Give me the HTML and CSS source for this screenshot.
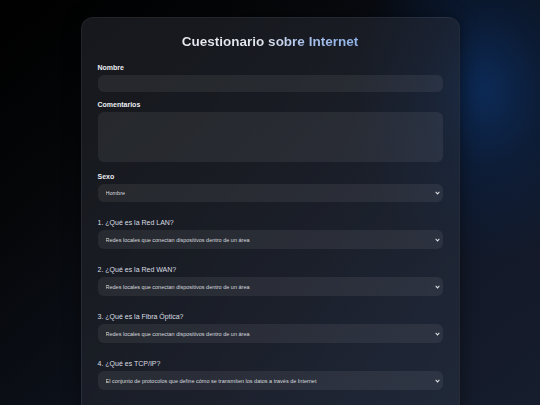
FILE: index.html
```html
<!DOCTYPE html>
<html lang="es">
<head>
<meta charset="utf-8">
<title>Cuestionario sobre Internet</title>
<link rel="stylesheet" href="styles.css">
</head>
<body>
<main class="card">
  <h1 class="title">Cuestionario sobre Internet</h1>
  <form class="form">
    <div class="field">
      <label class="label" for="nombre">Nombre</label>
      <input class="control input" id="nombre" type="text">
    </div>
    <div class="field">
      <label class="label" for="comentarios">Comentarios</label>
      <textarea class="control textarea" id="comentarios"></textarea>
    </div>
    <div class="field field-sexo">
      <label class="label" for="sexo">Sexo</label>
      <select class="control select" id="sexo">
        <option>Hombre</option>
        <option>Mujer</option>
      </select>
    </div>
    <div class="field question">
      <label class="qlabel" for="q1">1. ¿Qué es la Red LAN?</label>
      <select class="control select" id="q1">
        <option>Redes locales que conectan dispositivos dentro de un área</option>
      </select>
    </div>
    <div class="field question">
      <label class="qlabel" for="q2">2. ¿Qué es la Red WAN?</label>
      <select class="control select" id="q2">
        <option>Redes locales que conectan dispositivos dentro de un área</option>
      </select>
    </div>
    <div class="field question">
      <label class="qlabel" for="q3">3. ¿Qué es la Fibra Óptica?</label>
      <select class="control select" id="q3">
        <option>Redes locales que conectan dispositivos dentro de un área</option>
      </select>
    </div>
    <div class="field question">
      <label class="qlabel" for="q4">4. ¿Qué es TCP/IP?</label>
      <select class="control select" id="q4">
        <option>El conjunto de protocolos que define cómo se transmiten los datos a través de Internet</option>
      </select>
    </div>
  </form>
</main>
</body>
</html>
```

FILE: styles.css
```css
* { box-sizing: border-box; }

html, body { height: 100%; }

body {
  margin: 0;
  overflow: hidden;
  font-family: "Liberation Sans", Arial, sans-serif;
  color: #e6e8ec;
  background:
    radial-gradient(ellipse 130px 175px at 485px 90px, rgba(12, 46, 96, 0.85) 0%, rgba(10, 36, 76, 0.5) 45%, rgba(10, 30, 60, 0) 100%),
    linear-gradient(140deg, #000000 0%, #050608 25%, #0b0f17 50%, #121827 75%, #161d2d 100%);
  padding-top: 17px;
}

.card {
  width: 379px;
  margin: 0 auto;
  min-height: 420px;
  padding: 16px 16px;
  border-radius: 12px;
  background: linear-gradient(120deg, rgba(30, 32, 38, 0.75) 0%, rgba(36, 40, 50, 0.6) 55%, rgba(44, 54, 72, 0.5) 100%);
  border: 1px solid rgba(255, 255, 255, 0.05);
  box-shadow: 0 0 18px rgba(0, 0, 0, 0.45);
}

.title {
  margin: 0 auto 14px;
  font-size: 13.5px;
  line-height: 16px;
  font-weight: 700;
  text-align: center;
  background: linear-gradient(90deg, #e9ecf2 0%, #e2e6ee 45%, #a9c2ec 70%, #92b3ea 100%);
  -webkit-background-clip: text;
  background-clip: text;
  color: transparent;
  width: max-content;
}

.form {
  display: flex;
  flex-direction: column;
  gap: 9px;
}

.field {
  display: flex;
  flex-direction: column;
  gap: 3px;
}

.field-sexo { margin-top: 2px; }
.question { margin-top: 8px; }

.label {
  font-size: 7px;
  line-height: 8px;
  font-weight: 700;
  color: #eceef2;
}

.qlabel {
  font-size: 7px;
  line-height: 8px;
  font-weight: 400;
  color: #dadde3;
}

.control {
  display: block;
  width: 100%;
  border: 0;
  border-radius: 6px;
  background: rgba(255, 255, 255, 0.065);
  color: #d6d9df;
  font-family: "Liberation Sans", Arial, sans-serif;
  font-size: 5.5px;
  outline: none;
  margin: 0;
}

.input { height: 17px; padding: 0 8px; }

.textarea {
  height: 50px;
  padding: 6px 8px;
  resize: vertical;
}

.textarea::-webkit-resizer {
  background: transparent;
}

.select {
  height: 18px;
  padding: 0 14px 0 8px;
  -webkit-appearance: none;
  appearance: none;
  background-image: url("data:image/svg+xml,%3Csvg xmlns='http://www.w3.org/2000/svg' width='6' height='4' viewBox='0 0 6 4'%3E%3Cpath d='M0.8 0.8 L3 3 L5.2 0.8' fill='none' stroke='%23e4e6ea' stroke-width='1.1'/%3E%3C/svg%3E");
  background-repeat: no-repeat;
  background-position: right 3px center;
  background-size: 5px 3.5px;
}

.question .select { height: 19px; }

.select option {
  background: #23262d;
  color: #d6d9df;
}
```
